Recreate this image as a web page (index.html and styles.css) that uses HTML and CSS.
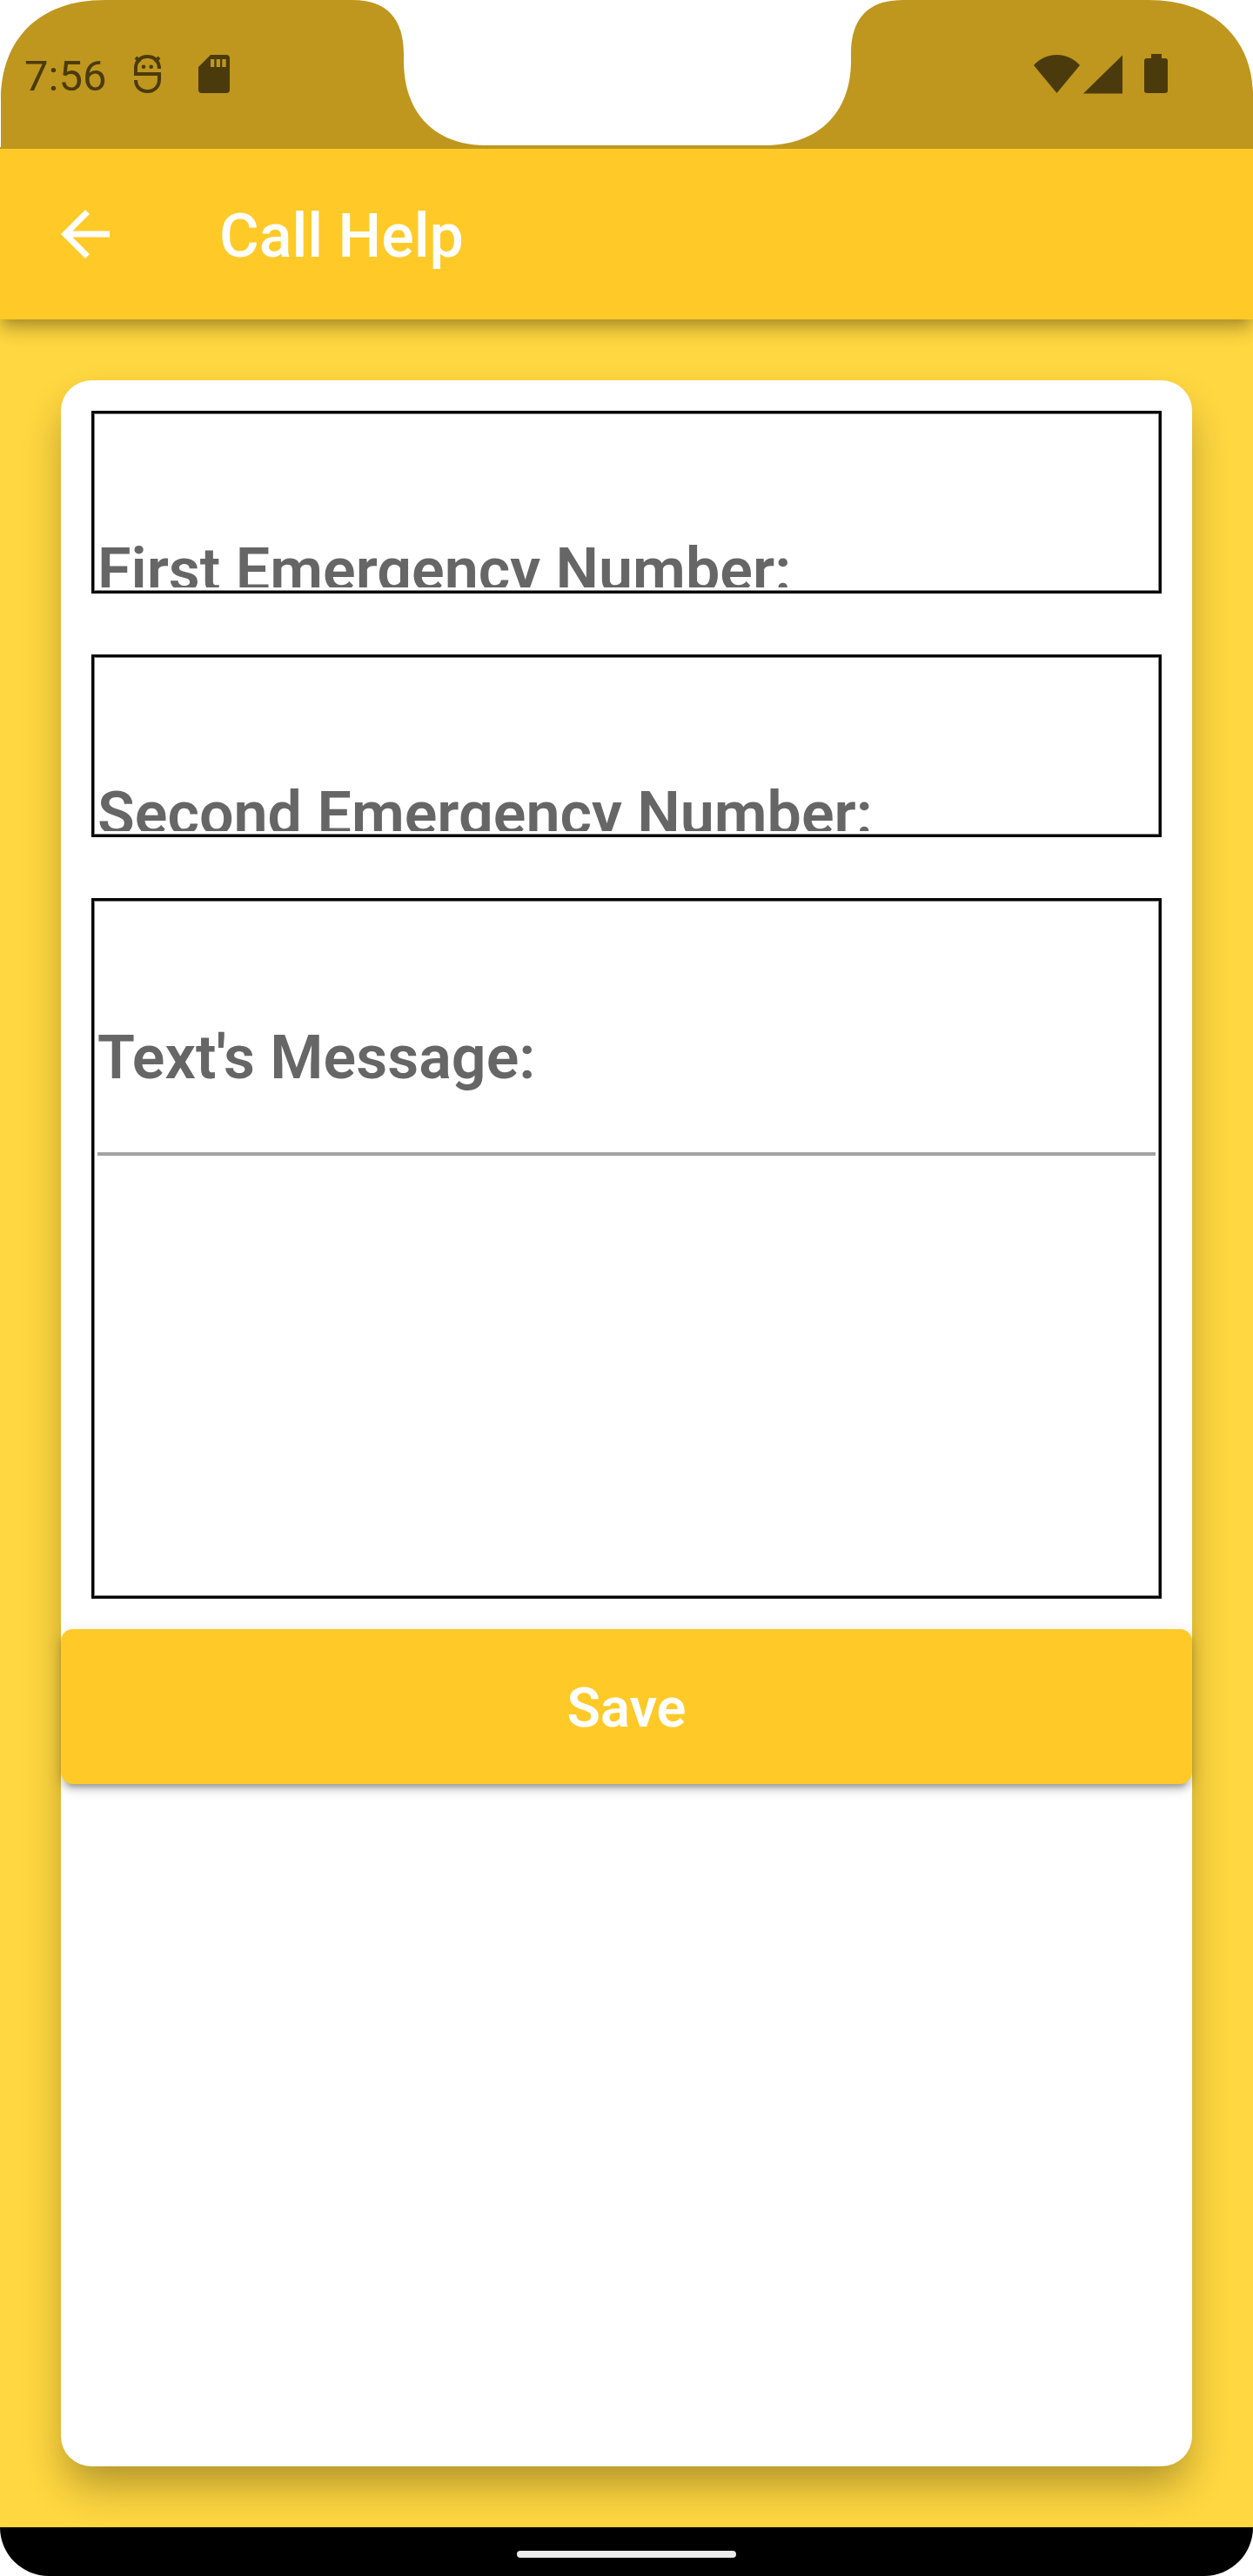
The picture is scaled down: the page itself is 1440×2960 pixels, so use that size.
FILE: index.html
```html
<!DOCTYPE html>
<html lang="en">
<head>
  <meta charset="utf-8">
  <meta name="viewport" content="width=device-width, initial-scale=1">
  <title>Call Help</title>
  <link rel="stylesheet" href="styles.css">
</head>
<body>
  <div class="status">
    <svg class="cutout cutout-left" viewBox="0 0 120 171" aria-hidden="true"><path d="M0 0H120C45 0 1 45 1 115V169H0Z"/></svg>
    <svg class="cutout cutout-notch" viewBox="400 0 640 171" aria-hidden="true"><path d="M405 0C445 0 464 22 464 62V70C464 130 500 167 558 167H879C940 167 978 130 978 70V62C978 22 997 0 1038 0Z"/></svg>
    <svg class="cutout cutout-right" viewBox="0 0 120 171" aria-hidden="true"><path d="M0 0C75 0 118 45 120 105V0Z"/></svg>
    <div class="status-group">
      <span class="clock">7:56</span>
      <svg width="46" height="50" viewBox="0 0 46 50" aria-hidden="true">
        <path class="line" d="M33 19C33 10 27 5 19.500 5C11 5 6 11 6 18V25H33V31C33 40 27 45 19.500 45C12 45 6 40 6 32M6 6L11 11M33 6L28 11"/>
        <circle cx="15" cy="16.700" r="2.300"/><circle cx="23.700" cy="16.700" r="2.300"/>
      </svg>
      <svg width="44" height="50" viewBox="0 0 44 50" aria-hidden="true">
        <path fill-rule="evenodd" d="M18 3H36Q40 3 40 7V43Q40 47 36 47H8Q4 47 4 43V17ZM18 8V17H22.300V8ZM24.700 8V17H29V8ZM31.300 8V17H35.700V8Z"/>
      </svg>
    </div>
    <div class="status-group status-signals">
      <svg width="53" height="50" viewBox="0 0 53 50" aria-hidden="true"><path d="M0 15C14 -1 39 -1 53 15L26.500 47Z"/></svg>
      <svg width="45" height="50" viewBox="0 0 45 50" aria-hidden="true"><path d="M0 47.500H45V3.500Z"/></svg>
      <svg width="48" height="50" viewBox="0 0 48 50" aria-hidden="true"><path d="M29 2H41V7H45Q48 7 48 10V44Q48 47 45 47H24Q21 47 21 44V10Q21 7 24 7H29Z"/></svg>
    </div>
  </div>

  <header class="appbar">
    <button class="back" type="button" aria-label="Back">
      <svg width="84" height="84" viewBox="0 0 24 24" aria-hidden="true"><path d="M20 11H7.830l5.590-5.590L12 4l-8 8 8 8 1.410-1.410L7.830 13H20v-2z"/></svg>
    </button>
    <h1 class="title">Call Help</h1>
  </header>

  <main class="page">
    <form class="card">
      <div class="fields">
        <div class="field">
          <div class="field-body">
            <label for="first">First Emergency Number:</label>
            <input id="first" type="tel">
          </div>
        </div>
        <div class="field">
          <div class="field-body">
            <label for="second">Second Emergency Number:</label>
            <input id="second" type="tel">
          </div>
        </div>
        <div class="field field-tall">
          <div class="field-body">
            <label for="message">Text's Message:</label>
            <input id="message" type="text">
          </div>
        </div>
      </div>
      <button class="save" type="submit">Save</button>
    </form>
  </main>

  <footer class="navbar"><span class="handle"></span></footer>
</body>
</html>
```
FILE: styles.css
```css
* {
  box-sizing: border-box;
}

body {
  margin: 0;
  min-height: 100vh;
  display: flex;
  flex-direction: column;
  background: #fff;
  font-family: Roboto, "Liberation Sans", sans-serif;
}

svg {
  display: block;
  flex: none;
}

/* Status bar */
.status {
  position: relative;
  z-index: 2;
  display: flex;
  justify-content: space-between;
  height: 171px;
  padding: 60px 98px 0 28px;
  background: #bf971e;
  color: #4b3b0c;
  fill: #4b3b0c;
}

.cutout {
  position: absolute;
  top: 0;
  height: 171px;
  fill: #fff;
}

.cutout-left {
  left: 0;
  width: 120px;
}

.cutout-right {
  right: 0;
  width: 120px;
}

.cutout-notch {
  left: 50%;
  width: 640px;
  margin-left: -320px;
}

.status-group {
  display: flex;
  gap: 28px;
  height: 50px;
}

.status-signals {
  gap: 4px;
}

.clock {
  font-size: 49px;
  line-height: 56px;
}

.line {
  fill: none;
  stroke: #4b3b0c;
  stroke-width: 4;
}

/* App bar */
.appbar {
  position: relative;
  z-index: 1;
  display: flex;
  align-items: center;
  gap: 112px;
  height: 196px;
  padding: 0 56px;
  background: #ffca28;
  color: #fff;
  box-shadow: 0 7px 14px -4px rgba(0, 0, 0, 0.2), 0 14px 18px 0 rgba(0, 0, 0, 0.14), 0 4px 28px 0 rgba(0, 0, 0, 0.1);
}

.back {
  padding: 0;
  border: 0;
  background: none;
  fill: #fff;
}

.title {
  margin: 0;
  padding-top: 4px;
  font-size: 70px;
  font-weight: 500;
  line-height: 84px;
}

/* Form */
.page {
  flex: 1;
  display: flex;
  padding: 70px;
  background: #ffd740;
}

.card {
  flex: 1;
  border-radius: 35px;
  background: #fff;
  box-shadow: 0 26px 48px -6px rgba(0, 0, 0, 0.32);
}

.fields {
  display: flex;
  flex-direction: column;
  gap: 70px;
  padding: 35px;
}

.field {
  height: 210px;
  padding: 4px;
  border: 3px solid #000;
  box-shadow: inset 0 0 0 1px #808080;
}

.field-tall {
  height: 805px;
}

.field-body {
  display: grid;
  grid-template-rows: 289px;
  max-height: 100%;
  overflow: hidden;
}

.field-body > * {
  grid-area: 1 / 1;
}

.field-body label {
  padding-top: 134px;
  color: #666;
  font-size: 70px;
  font-weight: 600;
  line-height: 84px;
}

.field-body input {
  width: 100%;
  padding: 134px 0 67px;
  border: 0;
  border-bottom: 4px solid #a3a3a3;
  outline: 0;
  background: none;
  color: #222;
  font: 600 70px/84px Roboto, "Liberation Sans", sans-serif;
}

.save {
  display: block;
  width: 100%;
  height: 178px;
  padding: 4px 0 0;
  border: 0;
  border-radius: 14px;
  background: #ffca28;
  color: #fff;
  font: 600 63px/74px Roboto, "Liberation Sans", sans-serif;
  box-shadow: 0 10px 4px -7px rgba(0, 0, 0, 0.2), 0 7px 7px 0 rgba(0, 0, 0, 0.14), 0 4px 18px 0 rgba(0, 0, 0, 0.12);
}

/* System navigation */
.navbar {
  display: flex;
  align-items: center;
  justify-content: center;
  position: relative;
  z-index: 1;
  height: 56px;
  padding-top: 6px;
  border-radius: 0 0 56px 56px;
  background: #000;
}

.handle {
  width: 252px;
  height: 8px;
  border-radius: 4px;
  background: #ebebeb;
}
```
